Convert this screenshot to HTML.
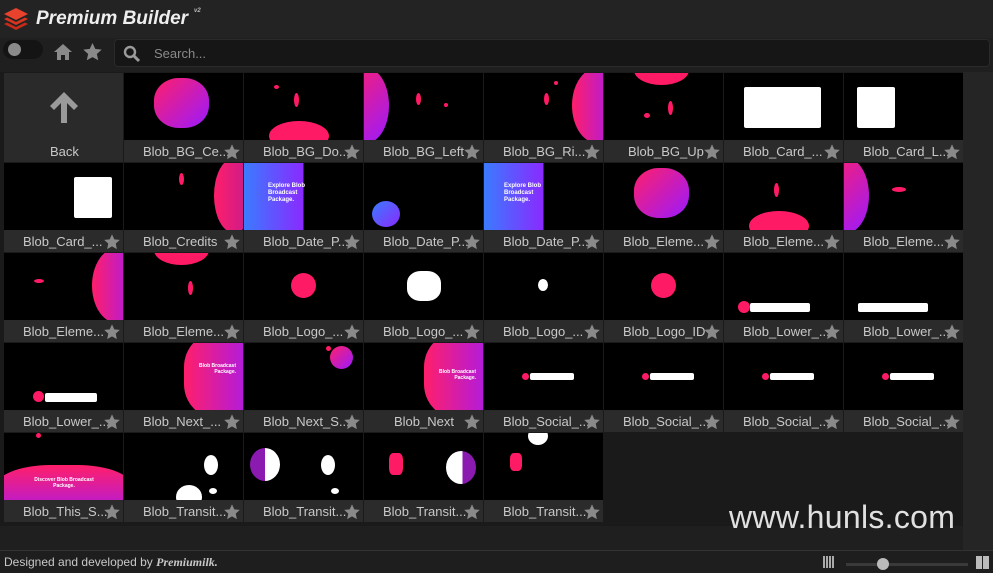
<!DOCTYPE html>
<html><head><meta charset="utf-8"><style>
*{margin:0;padding:0;box-sizing:border-box}
body{width:993px;height:573px;background:#1f1f1f;font-family:"Liberation Sans",sans-serif;position:relative;overflow:hidden}
.hdr{position:absolute;left:0;top:0;width:993px;height:38px;background:#232323}
.title{position:absolute;left:36px;top:8px;color:#eee;font-weight:bold;font-style:italic;font-size:19px}
.title sup{font-size:6px;color:#bbb;margin-left:6px;vertical-align:top}
.tog{position:absolute;left:3px;top:40px;width:40px;height:19px;border-radius:10px;background:#141414}
.tog i{position:absolute;left:5px;top:3px;width:13px;height:13px;border-radius:50%;background:#8a8a8a}
.srch{position:absolute;left:114px;top:39px;width:876px;height:28px;background:#161616;border-radius:4px;border:1px solid #2a2a2a}
.srch span{position:absolute;left:39px;top:6px;color:#8a8a8a;font-size:13px}
.grid{position:absolute;left:0;top:72px;width:963px;height:454px;background:#1a1a1a}
.sb{position:absolute;left:963px;top:72px;width:30px;height:478px;background:#252525}
.c{position:absolute;width:119px;height:89px;background:#2a2a2a}
.t{position:absolute;left:0;top:0;width:119px;height:67px;background:#000;overflow:hidden}
.l{position:absolute;left:0;top:68px;width:119px;height:21px;background:#2b2b2b;color:#c8c8c8;font-size:13px;line-height:21px;padding-left:19px;white-space:nowrap}
.s{position:absolute;right:3px;top:3px;width:16px;height:16px}
.b{position:absolute;border-radius:50%;background:linear-gradient(135deg,#ff1f6a,#9a1aff)}
.p{position:absolute;border-radius:50%;background:#ff1a66}
.w{position:absolute;border-radius:50%;background:#fff}
.card{position:absolute;background:#fff;border-radius:2px}
.txt{position:absolute;color:#fff;font-size:5px;font-weight:bold;text-align:right;line-height:6px}
.foot{position:absolute;left:0;top:550px;width:993px;height:23px;background:#1e1e1e;border-top:1px solid #333}
.foot span{position:absolute;left:4px;top:4px;color:#c8c8c8;font-size:12px}
.wm{position:absolute;left:729px;top:499px;color:#e0e0e0;font-size:32px;letter-spacing:0.3px}
</style></head><body>
<div class="hdr">
<svg style="position:absolute;left:4px;top:8px" width="24" height="22" viewBox="0 0 24 22"><path d="M12 0L24 6 12 12 0 6Z" fill="#e8412c"/><path d="M0 11l12 6 12-6-3-1.5-9 4.5-9-4.5z" fill="#d9341f"/><path d="M0 16l12 6 12-6-3-1.5-9 4.5-9-4.5z" fill="#c42b18"/></svg>
<div class="title">Premium Builder<sup>v2</sup></div>
</div>
<div class="tog"><i></i></div>
<svg style="position:absolute;left:53px;top:43px" width="20" height="18" viewBox="0 0 20 18"><path d="M10 1L1 9h3v8h4v-5h4v5h4V9h3z" fill="#8a8a8a"/></svg>
<svg style="position:absolute;left:83px;top:43px" width="19" height="18" viewBox="0 0 24 23"><path d="M12 0l3.5 7.5 8.2.9-6.1 5.6 1.7 8.1L12 18l-7.3 4.1 1.7-8.1L.3 8.4l8.2-.9z" fill="#8a8a8a"/></svg>
<div class="srch"><svg style="position:absolute;left:8px;top:5px" width="18" height="18" viewBox="0 0 18 18"><circle cx="7" cy="7" r="5" stroke="#9a9a9a" stroke-width="2.4" fill="none"/><path d="M11 11l5 5" stroke="#9a9a9a" stroke-width="3"/></svg><span>Search...</span></div>
<div class="grid"></div><div class="sb"></div>

<div class="c" style="left:4px;top:73px;background:#2a2a2a"><svg style="position:absolute;left:44px;top:17px" width="32" height="34" viewBox="0 0 32 34"><path d="M16 2L2 16l4 4 7-7v20h6V13l7 7 4-4z" fill="#9a9a9a"/></svg><div class="l" style="padding-left:46px;background:#2a2a2a">Back</div></div>
<div class="c" style="left:124px;top:73px"><div class="t"><div class="b" style="left:30px;top:5px;width:55px;height:50px;border-radius:45%"></div></div><div class="l">Blob_BG_Ce...</div></div>
<div class="c" style="left:244px;top:73px"><div class="t"><div class="p" style="left:25px;top:48px;width:60px;height:30px"></div><div class="p" style="left:50px;top:20px;width:5px;height:14px"></div><div class="p" style="left:30px;top:12px;width:5px;height:4px"></div></div><div class="l">Blob_BG_Do...</div></div>
<div class="c" style="left:364px;top:73px"><div class="t"><div class="b" style="left:-20px;top:-5px;width:45px;height:75px"></div><div class="p" style="left:52px;top:20px;width:5px;height:12px"></div><div class="p" style="left:80px;top:30px;width:4px;height:4px"></div></div><div class="l">Blob_BG_Left</div></div>
<div class="c" style="left:484px;top:73px"><div class="t"><div class="b" style="left:88px;top:-5px;width:50px;height:75px;background:linear-gradient(90deg,#ff1f6a,#9a1aff)"></div><div class="p" style="left:60px;top:20px;width:5px;height:12px"></div><div class="p" style="left:70px;top:8px;width:4px;height:4px"></div></div><div class="l">Blob_BG_Ri...</div></div>
<div class="c" style="left:604px;top:73px"><div class="t"><div class="p" style="left:30px;top:-18px;width:55px;height:30px"></div><div class="p" style="left:64px;top:28px;width:5px;height:14px"></div><div class="p" style="left:40px;top:40px;width:6px;height:5px"></div></div><div class="l" style="padding-left:24px">Blob_BG_Up</div></div>
<div class="c" style="left:724px;top:73px"><div class="t"><div class="card" style="left:20px;top:14px;width:77px;height:41px"></div></div><div class="l">Blob_Card_...</div></div>
<div class="c" style="left:844px;top:73px"><div class="t"><div class="card" style="left:13px;top:14px;width:38px;height:41px"></div></div><div class="l">Blob_Card_L...</div></div>
<div class="c" style="left:4px;top:163px"><div class="t"><div class="card" style="left:70px;top:14px;width:38px;height:41px"></div></div><div class="l">Blob_Card_...</div></div>
<div class="c" style="left:124px;top:163px"><div class="t"><div class="b" style="left:90px;top:-5px;width:40px;height:75px;background:linear-gradient(90deg,#ff1f6a,#c01a90)"></div><div class="p" style="left:55px;top:10px;width:5px;height:12px"></div></div><div class="l">Blob_Credits</div></div>
<div class="c" style="left:244px;top:163px"><div class="t" style="background:linear-gradient(90deg,#3a7bff,#8a2aff 50%,#000 50.1%)"><div class="txt" style="left:2px;top:20px;width:64px;text-align:left;padding-left:22px;font-size:6px;line-height:7px">Explore Blob Broadcast Package.</div></div><div class="l">Blob_Date_P...</div></div>
<div class="c" style="left:364px;top:163px"><div class="t"><div class="b" style="left:8px;top:38px;width:28px;height:26px;background:linear-gradient(135deg,#3a7bff,#8a2aff)"></div></div><div class="l">Blob_Date_P...</div></div>
<div class="c" style="left:484px;top:163px"><div class="t" style="background:linear-gradient(90deg,#3a7bff,#8a2aff 50%,#000 50.1%)"><div class="txt" style="left:2px;top:20px;width:64px;text-align:left;padding-left:18px;font-size:6px;line-height:7px">Explore Blob Broadcast Package.</div></div><div class="l">Blob_Date_P...</div></div>
<div class="c" style="left:604px;top:163px"><div class="t"><div class="b" style="left:30px;top:5px;width:55px;height:50px;border-radius:45%"></div></div><div class="l">Blob_Eleme...</div></div>
<div class="c" style="left:724px;top:163px"><div class="t"><div class="p" style="left:25px;top:48px;width:60px;height:30px"></div><div class="p" style="left:50px;top:20px;width:5px;height:14px"></div></div><div class="l">Blob_Eleme...</div></div>
<div class="c" style="left:844px;top:163px"><div class="t"><div class="b" style="left:-20px;top:-5px;width:45px;height:75px"></div><div class="p" style="left:48px;top:24px;width:14px;height:5px"></div></div><div class="l">Blob_Eleme...</div></div>
<div class="c" style="left:4px;top:253px"><div class="t"><div class="b" style="left:88px;top:-5px;width:50px;height:75px;background:linear-gradient(90deg,#ff1f6a,#9a1aff)"></div><div class="p" style="left:30px;top:26px;width:10px;height:4px"></div></div><div class="l">Blob_Eleme...</div></div>
<div class="c" style="left:124px;top:253px"><div class="t"><div class="p" style="left:30px;top:-18px;width:55px;height:30px"></div><div class="p" style="left:64px;top:28px;width:5px;height:14px"></div></div><div class="l">Blob_Eleme...</div></div>
<div class="c" style="left:244px;top:253px"><div class="t"><div class="p" style="left:47px;top:20px;width:25px;height:25px"></div></div><div class="l">Blob_Logo_...</div></div>
<div class="c" style="left:364px;top:253px"><div class="t"><div class="w" style="left:43px;top:18px;width:34px;height:30px;border-radius:40%"></div></div><div class="l">Blob_Logo_...</div></div>
<div class="c" style="left:484px;top:253px"><div class="t"><div class="w" style="left:54px;top:26px;width:10px;height:12px"></div></div><div class="l">Blob_Logo_...</div></div>
<div class="c" style="left:604px;top:253px"><div class="t"><div class="p" style="left:47px;top:20px;width:25px;height:25px"></div></div><div class="l">Blob_Logo_ID</div></div>
<div class="c" style="left:724px;top:253px"><div class="t"><div class="p" style="left:14px;top:48px;width:12px;height:12px"></div><div class="card" style="left:26px;top:50px;width:60px;height:9px"></div></div><div class="l">Blob_Lower_...</div></div>
<div class="c" style="left:844px;top:253px"><div class="t"><div class="card" style="left:14px;top:50px;width:70px;height:9px"></div></div><div class="l">Blob_Lower_...</div></div>
<div class="c" style="left:4px;top:343px"><div class="t"><div class="p" style="left:29px;top:48px;width:11px;height:11px"></div><div class="card" style="left:41px;top:50px;width:52px;height:9px"></div></div><div class="l">Blob_Lower_...</div></div>
<div class="c" style="left:124px;top:343px"><div class="t"><div class="b" style="left:60px;top:-10px;width:80px;height:85px;border-radius:40% 0 0 40%;background:linear-gradient(90deg,#ff1f6a,#9a1aff)"></div><div class="txt" style="left:60px;top:20px;width:52px">Blob Broadcast Package.</div></div><div class="l">Blob_Next_...</div></div>
<div class="c" style="left:244px;top:343px"><div class="t"><div class="b" style="left:86px;top:3px;width:23px;height:23px"></div><div class="p" style="left:82px;top:3px;width:5px;height:5px"></div></div><div class="l">Blob_Next_S...</div></div>
<div class="c" style="left:364px;top:343px"><div class="t"><div class="b" style="left:60px;top:-10px;width:80px;height:85px;border-radius:40% 0 0 40%;background:linear-gradient(90deg,#ff1f6a,#9a1aff)"></div><div class="txt" style="left:60px;top:26px;width:52px">Blob Broadcast Package.</div></div><div class="l" style="padding-left:30px">Blob_Next</div></div>
<div class="c" style="left:484px;top:343px"><div class="t"><div class="p" style="left:38px;top:30px;width:7px;height:7px"></div><div class="card" style="left:46px;top:30px;width:44px;height:7px"></div></div><div class="l">Blob_Social_...</div></div>
<div class="c" style="left:604px;top:343px"><div class="t"><div class="p" style="left:38px;top:30px;width:7px;height:7px"></div><div class="card" style="left:46px;top:30px;width:44px;height:7px"></div></div><div class="l">Blob_Social_...</div></div>
<div class="c" style="left:724px;top:343px"><div class="t"><div class="p" style="left:38px;top:30px;width:7px;height:7px"></div><div class="card" style="left:46px;top:30px;width:44px;height:7px"></div></div><div class="l">Blob_Social_...</div></div>
<div class="c" style="left:844px;top:343px"><div class="t"><div class="p" style="left:38px;top:30px;width:7px;height:7px"></div><div class="card" style="left:46px;top:30px;width:44px;height:7px"></div></div><div class="l">Blob_Social_...</div></div>
<div class="c" style="left:4px;top:433px"><div class="t"><div class="b" style="left:-10px;top:32px;width:140px;height:60px;border-radius:40% 40% 0 0;background:linear-gradient(180deg,#ff1f6a,#9a1aff)"></div><div class="p" style="left:32px;top:0px;width:5px;height:5px"></div><div class="txt" style="left:20px;top:44px;width:80px;text-align:center">Discover Blob Broadcast Package.</div></div><div class="l">Blob_This_S...</div></div>
<div class="c" style="left:124px;top:433px"><div class="t"><div class="w" style="left:80px;top:22px;width:14px;height:20px"></div><div class="w" style="left:52px;top:52px;width:26px;height:24px"></div><div class="w" style="left:85px;top:55px;width:8px;height:6px"></div></div><div class="l">Blob_Transit...</div></div>
<div class="c" style="left:244px;top:433px"><div class="t"><div class="w" style="left:6px;top:15px;width:30px;height:33px;background:linear-gradient(90deg,#8a1ab0 50%,#fff 50%)"></div><div class="w" style="left:77px;top:22px;width:14px;height:20px"></div><div class="w" style="left:87px;top:55px;width:8px;height:6px"></div></div><div class="l">Blob_Transit...</div></div>
<div class="c" style="left:364px;top:433px"><div class="t"><div class="p" style="left:25px;top:20px;width:14px;height:22px;border-radius:30%"></div><div class="w" style="left:82px;top:18px;width:30px;height:33px;background:linear-gradient(90deg,#fff 55%,#8a1ab0 55%)"></div></div><div class="l">Blob_Transit...</div></div>
<div class="c" style="left:484px;top:433px"><div class="t"><div class="w" style="left:44px;top:-6px;width:20px;height:18px"></div><div class="p" style="left:26px;top:20px;width:12px;height:18px;border-radius:30%"></div></div><div class="l">Blob_Transit...</div></div>

<div class="wm">www.hunls.com</div>
<div class="foot"><span>Designed and developed by <i style="font-family:'Liberation Serif',serif;font-weight:bold">Premiumilk.</i></span>
<div style="position:absolute;left:823px;top:5px;width:12px;height:12px;background:repeating-linear-gradient(90deg,#aaa 0 2px,transparent 2px 3px)"></div>
<div style="position:absolute;left:846px;top:12px;width:122px;height:3px;background:#3a3a3a"></div>
<div style="position:absolute;left:877px;top:7px;width:12px;height:12px;border-radius:50%;background:#bbb"></div>
<div style="position:absolute;left:976px;top:5px;width:13px;height:13px;background:linear-gradient(90deg,#bbb 45%,transparent 45% 55%,#bbb 55%)"></div>
</div>
<script>
document.querySelectorAll('.l').forEach(function(l){l.insertAdjacentHTML('beforeend','<svg class="s" viewBox="0 0 24 23"><path d="M12 0l3.5 7.5 8.2.9-6.1 5.6 1.7 8.1L12 18l-7.3 4.1 1.7-8.1L.3 8.4l8.2-.9z" fill="#8a8a8a"/></svg>')});
document.querySelector('.l').lastChild.remove();
</script>
</body></html>
